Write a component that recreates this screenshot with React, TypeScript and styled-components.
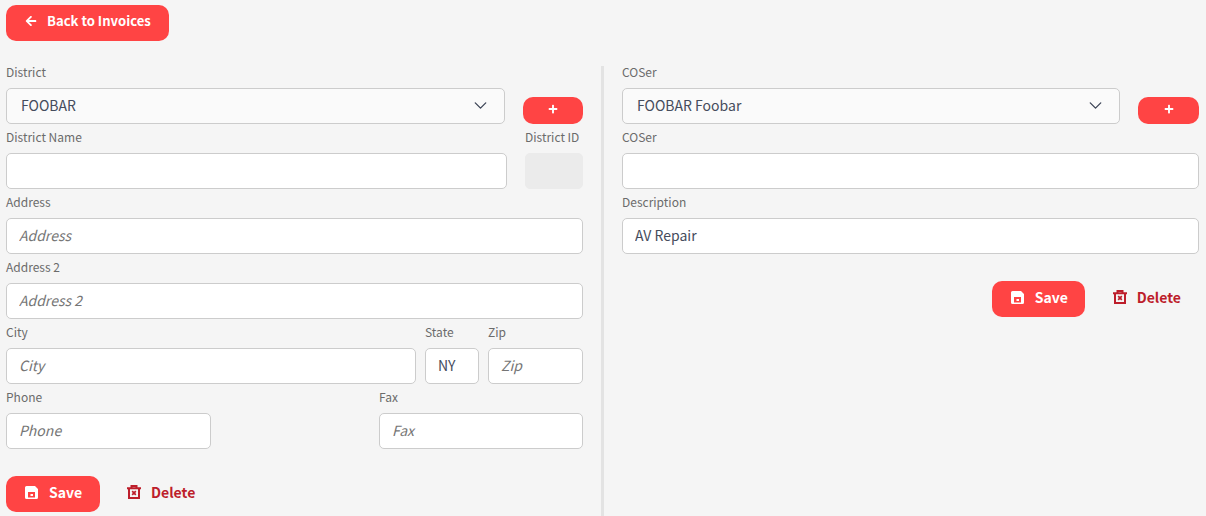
import React from 'react';
import styled, { createGlobalStyle } from 'styled-components';
import { FaArrowLeft, FaPlus } from 'react-icons/fa';
import { FiChevronDown } from 'react-icons/fi';

const font = '"Noto Sans CJK SC", "Source Sans Pro", "Noto Sans", sans-serif';
const red = '#ff4444';

const GlobalStyle = createGlobalStyle`
  html, body {
    margin: 0;
    height: 516px;
    overflow: hidden;
    background: #f5f5f5;
    font-family: ${font};
  }
  * { box-sizing: border-box; }
`;

const Page = styled.div`
  padding: 5px 7px 0 6px;
`;

const Button = styled.button`
  display: inline-flex;
  align-items: center;
  height: 36px;
  border: 0;
  border-radius: 10px;
  background: ${red};
  color: #fff;
  font-family: ${font};
  font-size: 14px;
  font-weight: 700;
  line-height: 18px;
  padding: 0 0 4px;
`;

const BackButton = styled(Button)`
  width: 163px;
  padding-left: 19px;
  gap: 10px;
  font-size: 13.1px;
  svg { width: 12px; height: 12px; }
`;

const Columns = styled.div`
  display: grid;
  grid-template-columns: 577px 577px;
  justify-content: space-between;
  margin-top: 23px;
  position: relative;
`;

const Column = styled.section`
  display: flex;
  flex-direction: column;
  gap: 5px;
`;

const Divider = styled.div`
  position: absolute;
  left: 595px;
  top: 2px;
  width: 3px;
  height: 460px;
  background: #e3e3e3;
`;

const Row = styled.div<{ $columns: string; $gap?: number }>`
  display: grid;
  grid-template-columns: ${p => p.$columns};
  justify-content: space-between;
  column-gap: ${p => p.$gap || 0}px;
  align-items: end;
`;

const Field = styled.label`
  display: flex;
  flex-direction: column;
  min-width: 0;
`;

const Label = styled.span`
  height: 18px;
  margin-bottom: 6px;
  font-size: 12px;
  line-height: 15px;
  white-space: nowrap;
  color: #6b6b6b;
`;

const Input = styled.input`
  width: 100%;
  height: 36px;
  padding: 0 12px 2px;
  border: 1px solid #cccccc;
  border-radius: 5px;
  background: #fff;
  color: #454c5c;
  font-family: ${font};
  font-size: 14px;
  outline: none;
  &::placeholder {
    color: #757575;
    font-style: italic;
    opacity: 1;
  }
  &:disabled {
    background: #ebebeb;
    border-color: #ebebeb;
  }
`;

const SelectBox = styled.div`
  display: flex;
  align-items: center;
  justify-content: space-between;
  height: 36px;
  padding: 0 13px 2px 14px;
  border: 1px solid #cccccc;
  border-radius: 5px;
  background: #fafafa;
  color: #454c5c;
  font-size: 14px;
  line-height: 18px;
  svg { width: 21px; height: 21px; stroke-width: 1.5; color: #3a4254; }
`;

const AddButton = styled(Button)`
  justify-content: center;
  height: 27px;
  width: 100%;
  svg { width: 10px; height: 10px; }
`;

const Actions = styled.div<{ $end?: boolean }>`
  display: flex;
  align-items: center;
  justify-content: ${p => (p.$end ? 'flex-end' : 'flex-start')};
  margin-top: 22px;
  padding-right: ${p => (p.$end ? '18px' : '0')};
`;

const SaveButton = styled(Button)<{ $width: number }>`
  width: ${p => p.$width}px;
  padding-left: 19px;
  gap: 11px;
  svg { width: 13px; height: 13px; }
`;

const DeleteButton = styled.button<{ $offset: number }>`
  display: inline-flex;
  align-items: center;
  gap: 10px;
  margin-left: ${p => p.$offset}px;
  padding: 0 0 4px;
  border: 0;
  background: none;
  color: #bd1e2b;
  font-family: ${font};
  font-size: 14px;
  font-weight: 700;
  line-height: 18px;
  svg { width: 14px; height: 14px; }
`;

const SaveIcon = () => (
  <svg viewBox="0 0 13 13" fill="currentColor">
    <path
      fillRule="evenodd"
      d="M1.5 0H10l3 3v8.500a1.500 1.500 0 0 1-1.500 1.500h-10A1.500 1.500 0 0 1 0 11.500v-10A1.500 1.500 0 0 1 1.500 0ZM3 6v5.500h7V6H3Zm2.500 2h2.500v2H5.500V8Z"
    />
  </svg>
);

const TrashIcon = () => (
  <svg viewBox="0 0 14 14" fill="none" stroke="currentColor" strokeWidth="2">
    <path d="M0 3.200h14M4.500 3V1h5V3M2 3v10h10V3" />
    <path d="M5.200 6.200l3.600 3.600M8.800 6.200l-3.600 3.600" strokeWidth="1.700" />
  </svg>
);

const ActionBar = ({ end }: { end?: boolean }) => (
  <Actions $end={end}>
    <SaveButton $width={end ? 93 : 94}>
      <SaveIcon />
      Save
    </SaveButton>
    <DeleteButton $offset={end ? 28 : 27}>
      <TrashIcon />
      Delete
    </DeleteButton>
  </Actions>
);

const App = () => (
  <Page>
    <GlobalStyle />
    <BackButton>
      <FaArrowLeft />
      Back to Invoices
    </BackButton>
    <Columns>
      <Column>
        <Row $columns="499px 60px">
          <Field as="div">
            <Label>District</Label>
            <SelectBox>
              FOOBAR
              <FiChevronDown />
            </SelectBox>
          </Field>
          <AddButton>
            <FaPlus />
          </AddButton>
        </Row>
        <Row $columns="501px 58px">
          <Field>
            <Label>District Name</Label>
            <Input />
          </Field>
          <Field>
            <Label>District ID</Label>
            <Input disabled />
          </Field>
        </Row>
        <Field>
          <Label>Address</Label>
          <Input placeholder="Address" />
        </Field>
        <Field>
          <Label>Address 2</Label>
          <Input placeholder="Address 2" />
        </Field>
        <Row $columns="410px 54px 95px" $gap={9}>
          <Field>
            <Label>City</Label>
            <Input placeholder="City" />
          </Field>
          <Field>
            <Label>State</Label>
            <Input defaultValue="NY" />
          </Field>
          <Field>
            <Label>Zip</Label>
            <Input placeholder="Zip" />
          </Field>
        </Row>
        <Row $columns="205px 204px">
          <Field>
            <Label>Phone</Label>
            <Input placeholder="Phone" />
          </Field>
          <Field>
            <Label>Fax</Label>
            <Input placeholder="Fax" />
          </Field>
        </Row>
        <ActionBar />
      </Column>
      <Divider />
      <Column>
        <Row $columns="498px 61px">
          <Field as="div">
            <Label>COSer</Label>
            <SelectBox>
              FOOBAR Foobar
              <FiChevronDown />
            </SelectBox>
          </Field>
          <AddButton>
            <FaPlus />
          </AddButton>
        </Row>
        <Field>
          <Label>COSer</Label>
          <Input />
        </Field>
        <Field>
          <Label>Description</Label>
          <Input defaultValue="AV Repair" />
        </Field>
        <ActionBar end />
      </Column>
    </Columns>
  </Page>
);

export default App;
